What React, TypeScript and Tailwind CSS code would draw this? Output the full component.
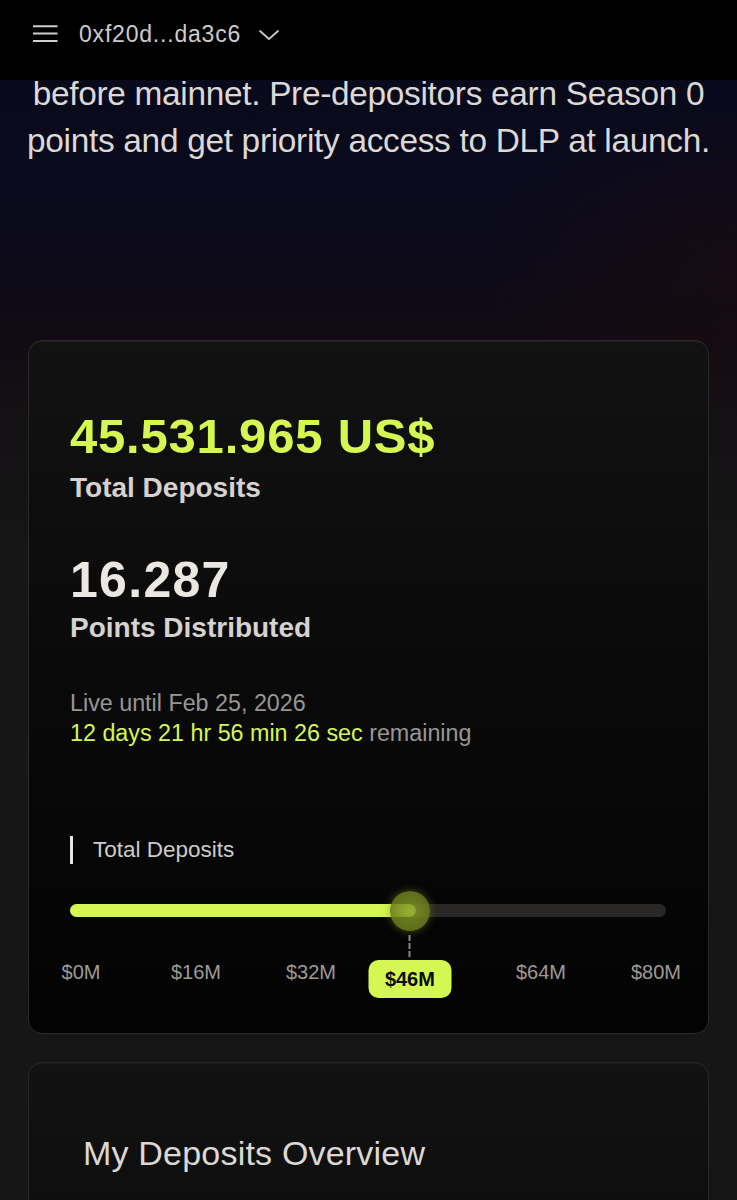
const LIME = '#d5f752'

const ticks = ['$0M', '$16M', '$32M', '$48M', '$64M', '$80M']

function Header() {
  return (
    <header className="fixed inset-x-0 top-0 z-20 flex h-[80px] items-center bg-black pb-[12px] pl-[33px]">
      <svg width="25" height="18" viewBox="0 0 25 18" className="text-[#d2cec9]">
        <path d="M0 1.2h24.5M0 8.6h24.5M0 16h24.5" stroke="currentColor" strokeWidth="2" />
      </svg>
      <span className="ml-[21px] text-[23px] leading-none tracking-[0.8px] text-[#cfcbc7]">0xf20d...da3c6</span>
      <svg width="20" height="10" viewBox="0 0 20 10" className="ml-[18px] mt-[1px] text-[#cfcbc7]">
        <path d="M1 1l9 8 9-8" fill="none" stroke="currentColor" strokeWidth="1.7" strokeLinecap="round" strokeLinejoin="round" />
      </svg>
    </header>
  )
}

function DepositSlider({ value, max }: { value: number; max: number }) {
  const pct = (value / max) * 100
  return (
    <div className="mt-[40px]">
      <div className="relative mr-[1px] h-[13px] rounded-full bg-[#2a2826]">
        <div className="h-full rounded-full bg-[#d5f752]" style={{ width: `${pct + 0.6}%` }} />
        <div
          className="absolute top-1/2 h-[40px] w-[40px] -translate-x-1/2 -translate-y-1/2 rounded-full bg-[radial-gradient(circle,rgba(140,160,40,0.8)_0%,rgba(110,128,30,0.88)_60%,rgba(80,95,22,0.95)_100%)] shadow-[0_0_8px_rgba(120,140,30,0.55)]"
          style={{ left: `${pct - 0.5}%` }}
        />
      </div>

      <div className="relative mx-[11px] mt-[45px] flex justify-between">
        {ticks.map((t, i) => (
          <div key={t} className="flex w-0 justify-center">
            <span className={`whitespace-nowrap text-[20px] leading-none text-[#9e9a96] ${i === 3 ? 'invisible' : ''}`}>{t}</span>
          </div>
        ))}
        <div className="absolute top-[-2px] flex -translate-x-1/2 flex-col items-center" style={{ left: `${pct - 0.3}%` }}>
          <div className="absolute bottom-full mb-[3px] h-[22px] border-l-2 border-dashed border-[#8a8784]" />
          <div className="flex h-[38px] w-[83px] items-center justify-center rounded-[10px] bg-[#d5f752] text-[20px] font-bold text-[#0b0b0b]">
            $46M
          </div>
        </div>
      </div>
    </div>
  )
}

export default function App() {
  return (
    <div className="min-h-screen bg-[linear-gradient(180deg,#09091b_0px,#0a0a1d_180px,#0c0a19_260px,#110b13_340px,#141114_420px,#161616_560px)] font-['Liberation_Sans',Arial,sans-serif]">
      <Header />

      <div className="relative overflow-hidden pb-[40px]">
        <div className="pointer-events-none absolute right-0 top-[100px] h-[320px] w-[260px] bg-[radial-gradient(ellipse_at_right,rgba(36,12,10,0.4),transparent_70%)]" />

        <p className="relative pt-[70px] text-center text-[33.4px] leading-[47px] tracking-[-0.3px] text-[#dcd8d4]">
          before mainnet. Pre-depositors earn Season 0
          <br />
          points and get priority access to DLP at launch.
        </p>

        <section className="relative mx-[28px] mt-[176px] rounded-[14px] border border-[#2b2a2a] bg-[linear-gradient(180deg,#121212_0%,#0a0a0a_45%,#030303_100%)] px-[41px] pb-[51px] pt-[71px] shadow-[inset_0_1px_0_rgba(255,255,255,0.06)]">
          <div className="text-[49px] font-bold leading-none tracking-[0.8px]" style={{ color: LIME }}>
            45.531.965 US$
          </div>
          <div className="mt-[11px] text-[28px] font-bold leading-[32px] text-[#d6d2cf]">Total Deposits</div>

          <div className="mt-[51px] text-[50px] font-bold leading-none tracking-[1.3px] text-[#ebe7e3]">16.287</div>
          <div className="mt-[7px] text-[28px] font-bold leading-[32px] text-[#d6d2cf]">Points Distributed</div>

          <div className="mt-[44px] text-[23.3px] leading-[30px] text-[#9a9693]">Live until Feb 25, 2026</div>
          <div className="text-[23.3px] leading-[30px] text-[#9a9693]">
            <span style={{ color: LIME }}>12 days 21 hr 56 min 26 sec</span> remaining
          </div>

          <div className="mt-[88px] flex items-center">
            <div className="h-[28px] w-[3px] bg-[#e8e4e0]" />
            <span className="ml-[20px] text-[22.5px] leading-none text-[#cfcbc8]">Total Deposits</span>
          </div>

          <DepositSlider value={46} max={80} />
        </section>

        <section className="mx-[28px] mt-[28px] h-[200px] rounded-[14px] border border-[#262626] bg-[linear-gradient(180deg,#121212_0%,#0d0d0d_100%)] px-[54px] pt-[73px] shadow-[inset_0_1px_0_rgba(255,255,255,0.05)]">
          <h2 className="text-[34px] leading-none tracking-[0.2px] text-[#dcd8d4]">My Deposits Overview</h2>
        </section>
      </div>
    </div>
  )
}
